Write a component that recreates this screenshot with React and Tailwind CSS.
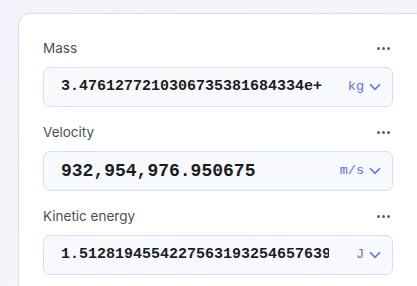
import { ChevronDown } from "lucide-react";

const fields = [
    { label: "Mass", value: "3.4761277210306735381684334e+", unit: "kg", big: false },
    { label: "Velocity", value: "932,954,976.950675", unit: "m/s", big: true },
    { label: "Kinetic energy", value: "1.51281945542275631932546576395", unit: "J", big: false },
];

function Dots() {
    return (
        <div className="flex items-center gap-[2px] mr-[3px]">
            <span className="w-[3px] h-[3px] bg-[#5a5f6c] rounded-full" />
            <span className="w-[3px] h-[3px] bg-[#5a5f6c] rounded-full" />
            <span className="w-[3px] h-[3px] bg-[#5a5f6c] rounded-full" />
        </div>
    );
}

export default function App() {
    return (
        <div className="w-[417px] h-[286px] overflow-hidden bg-gradient-to-br from-[#f2f3fa] to-[#f7f7fc] pt-[13px] pl-[18px]">
            <div className="w-[410px] h-[300px] bg-white border border-[#d9dce6] rounded-[12px] pt-[24px] pl-[24px] pr-[24px]" style={{ fontFamily: "Inter, 'Noto Sans', sans-serif" }}>
                <div className="w-[350px] flex flex-col gap-[15px]">
                    {fields.map((f) => (
                        <div key={f.label}>
                            <div className="flex items-center justify-between h-[20px] mb-[9px]">
                                <span className="text-[13.5px] text-[#4a4f5c]">{f.label}</span>
                                <Dots />
                            </div>
                            <div className="h-[40px] flex items-center bg-[#f7f9fd] border border-[#d3defc] rounded-[7px] pl-[17px] pr-[8px]">
                                <div
                                    className={`w-[268px] overflow-hidden whitespace-nowrap text-[#1c1d22] font-bold ${f.big ? "text-[18px]" : "text-[15px]"}`}
                                    style={{ fontFamily: "'Liberation Mono', monospace" }}
                                >
                                    {f.value}
                                </div>
                                <div className="flex-1 flex items-center justify-end gap-[2px] text-[#5b6ef5]">
                                    <span className="text-[13.5px]" style={{ fontFamily: "'Liberation Mono', monospace" }}>{f.unit}</span>
                                    <ChevronDown className="w-[18px] h-[18px]" strokeWidth={2.2} />
                                </div>
                            </div>
                        </div>
                    ))}
                </div>
            </div>
        </div>
    );
}
